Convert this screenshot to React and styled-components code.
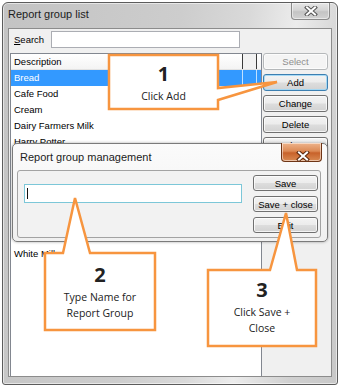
import React from 'react';
import styled, { createGlobalStyle } from 'styled-components';

const GlobalStyle = createGlobalStyle`
  html, body {
    margin: 0;
    padding: 0;
    background: #ffffff;
  }
  body {
    font-family: "Liberation Sans", Arial, sans-serif;
  }
  * {
    box-sizing: border-box;
  }
`;

const Stage = styled.div`
  position: relative;
  width: 340px;
  height: 387px;
  padding: 2px;
  overflow: hidden;
`;

const Window = styled.div`
  width: 336px;
  height: 383px;
  border: 1px solid #5c5c5c;
  border-radius: 6px 6px 3px 3px;
  background: linear-gradient(100deg, #c3c3c3 0%, #cdcdcd 45%, #d9d9d9 62%, #ececec 74%, #d0d0d0 88%, #c8c8c8 100%);
  box-shadow: inset 0 0 0 1px rgba(255, 255, 255, 0.55);
  padding: 0 5px 7px 5px;
  display: flex;
  flex-direction: column;
`;

const TitleBar = styled.div`
  height: 25px;
  display: flex;
  justify-content: space-between;
  align-items: flex-start;
`;

const Title = styled.span`
  padding-top: 5px;
  font-size: 11px;
  line-height: 13px;
  color: #1c1c1c;
`;

const CloseBox = styled.span`
  width: 39px;
  height: 17px;
  margin-right: 2px;
  display: flex;
  align-items: center;
  justify-content: center;
  border: 1px solid #7e7e7e;
  border-top: none;
  border-radius: 0 0 4px 4px;
  background: ${(p) =>
    p.$hot
      ? 'linear-gradient(#eeb48c, #dc8a55 45%, #c8622a 55%, #d98a52)'
      : 'linear-gradient(#e6e6e6, #d4d4d4 45%, #c4c4c4 55%, #d2d2d2)'};
  border-color: ${(p) => (p.$hot ? '#6e3516' : '#8a8a8a')};
  box-shadow: inset 0 0 0 1px rgba(255, 255, 255, 0.5);
`;

const Client = styled.div`
  flex: 1;
  min-height: 0;
  border: 1px solid #8c8c8c;
  background: #f0f0f0;
  padding: 2px 3px 0 1px;
  display: flex;
  flex-direction: column;
`;

const SearchRow = styled.div`
  height: 17px;
  display: flex;
  align-items: center;
`;

const Label = styled.label`
  margin-left: 4px;
  width: 37px;
  font-size: 9.5px;
  color: #000;
  span {
    text-decoration: underline;
  }
`;

const TextBox = styled.div`
  width: ${(p) => p.$w}px;
  height: ${(p) => p.$h}px;
  background: #fff;
  border: 1px solid ${(p) => (p.$active ? '#7cc7d8' : '#abadb3')};
  display: flex;
  align-items: center;
  padding-left: 2px;
`;

const Caret = styled.span`
  width: 1px;
  height: 11px;
  background: #111;
`;

const Main = styled.div`
  flex: 1;
  min-height: 0;
  margin-top: 5px;
  display: flex;
  gap: 1px;
`;

const List = styled.div`
  width: 252px;
  border: 1px solid #828790;
  border-bottom: none;
  background: #fff;
  overflow: hidden;
`;

const Header = styled.div`
  height: 16px;
  display: grid;
  grid-template-columns: 232px 14px 1fr;
  background: linear-gradient(#ffffff, #f4f4f4);
  border-bottom: 1px solid #e2e2e2;
`;

const HeadCell = styled.div`
  font-size: 9.5px;
  line-height: 15px;
  padding-left: 3px;
  color: #000;
  border-right: 1px solid ${(p) => (p.$last ? 'transparent' : '#3a3a3a')};
  background: ${(p) => (p.$mid ? '#f1f1f1' : 'transparent')};
`;

const Row = styled.div`
  height: 16px;
  display: grid;
  grid-template-columns: 232px 14px 1fr;
  background: ${(p) => (p.$selected ? '#3399ff' : 'transparent')};
  color: ${(p) => (p.$selected ? '#ffffff' : '#000000')};
`;

const Cell = styled.div`
  font-size: 9.5px;
  line-height: 16px;
  padding-left: 3px;
  white-space: nowrap;
  border-right: 1px solid ${(p) => (p.$sel ? 'rgba(255,255,255,0.7)' : 'transparent')};
`;

const ButtonCol = styled.div`
  width: 65px;
  display: flex;
  flex-direction: column;
  gap: ${(p) => p.$gap}px;
`;

const Button = styled.button`
  width: 65px;
  height: ${(p) => p.$h}px;
  padding: 0;
  font-family: "Liberation Sans", Arial, sans-serif;
  font-size: 9.5px;
  color: ${(p) => (p.disabled ? '#8e8e8e' : '#000')};
  border: 1px solid ${(p) => (p.$focus ? '#3c7fb1' : p.disabled ? '#b5b8ba' : '#707070')};
  border-radius: 3px;
  background: ${(p) =>
    p.disabled
      ? '#f4f4f4'
      : 'linear-gradient(#f3f3f3, #ececec 48%, #dddddd 52%, #d2d2d2)'};
  box-shadow: inset 0 0 0 1px ${(p) => (p.$focus ? 'rgba(160, 215, 245, 0.9)' : 'rgba(255,255,255,0.75)')};
`;

const Dialog = styled.div`
  position: absolute;
  left: 12px;
  top: 143px;
  width: 316px;
  height: 99px;
  border: 1px solid #7b7b7b;
  border-radius: 5px;
  background: linear-gradient(#fbfbfb, #f0f0f0);
  box-shadow: 0 0 3px rgba(0, 0, 0, 0.35);
  padding: 0 6px 3px 4px;
  display: flex;
  flex-direction: column;
`;

const DialogTitle = styled.div`
  height: 26px;
  display: flex;
  justify-content: space-between;
  align-items: flex-start;
  span {
    padding: 7px 0 0 3px;
    font-size: 11px;
    line-height: 13px;
    color: #1c1c1c;
  }
  ${CloseBox} {
    margin: -1px -1px 0 0;
    width: 41px;
    height: 19px;
  }
`;

const Panel = styled.div`
  flex: 1;
  border: 1px solid #a3a3a3;
  border-radius: 3px;
  background: #f2f2f2;
  display: flex;
  justify-content: space-between;
  padding: 4px 2px 0 6px;
`;

const InputWrap = styled.div`
  padding-top: 9px;
`;

const Callout = styled.div`
  position: absolute;
  left: ${(p) => p.$x}px;
  top: ${(p) => p.$y}px;
  width: ${(p) => p.$w}px;
  height: ${(p) => p.$h}px;
  display: flex;
  flex-direction: column;
  align-items: center;
  padding-top: ${(p) => p.$pad}px;
  font-family: "Open Sans", "Noto Sans", sans-serif;
  color: #222;
  svg {
    position: absolute;
    left: 0;
    top: 0;
    overflow: visible;
  }
`;

const Num = styled.span`
  position: relative;
  font-size: 20px;
  font-weight: 700;
  line-height: 22px;
  margin-bottom: 4px;
`;

const Note = styled.span`
  position: relative;
  font-size: 10.5px;
  line-height: 15.5px;
  text-align: center;
`;

function XGlyph({ hot }) {
  return (
    <svg width="14" height="10" viewBox="0 0 14 10">
      <path d="M3 1.5 L11 8.5 M11 1.5 L3 8.5" stroke={hot ? '#5a2a10' : '#555'} strokeWidth="4" strokeLinecap="square" />
      <path d="M3 1.5 L11 8.5 M11 1.5 L3 8.5" stroke="#fff" strokeWidth="2" strokeLinecap="square" />
    </svg>
  );
}

function Bubble({ x, y, w, h, pad, points, num, lines }) {
  return (
    <Callout $x={x} $y={y} $w={w} $h={h} $pad={pad}>
      <svg width={w} height={h}>
        <polygon points={points} fill="#ffffff" stroke="#f7953f" strokeWidth="2.5" strokeLinejoin="miter" />
      </svg>
      <Num>{num}</Num>
      {lines.map((l) => (
        <Note key={l}>{l}</Note>
      ))}
    </Callout>
  );
}

const items = [
  'Bread',
  'Cafe Food',
  'Cream',
  'Dairy Farmers Milk',
  'Harry Potter',
  'Ice Cream',
  'Juice',
  'Magazines',
  'Newspapers',
  'Snacks',
  'Soft Drinks',
  'White Milk',
];

export default function App() {
  return (
    <Stage>
      <GlobalStyle />
      <Window>
        <TitleBar>
          <Title>Report group list</Title>
          <CloseBox>
            <XGlyph />
          </CloseBox>
        </TitleBar>
        <Client>
          <SearchRow>
            <Label>
              <span>S</span>earch
            </Label>
            <TextBox $w={189} $h={17} />
          </SearchRow>
          <Main>
            <List>
              <Header>
                <HeadCell>Description</HeadCell>
                <HeadCell $mid />
                <HeadCell $last />
              </Header>
              {items.map((name, i) => (
                <Row key={name} $selected={i === 0}>
                  <Cell $sel={i === 0}>{name}</Cell>
                  <Cell $sel={i === 0} />
                  <Cell />
                </Row>
              ))}
            </List>
            <ButtonCol $gap={4}>
              <Button $h={17} disabled>Select</Button>
              <Button $h={17} $focus>Add</Button>
              <Button $h={17}>Change</Button>
              <Button $h={17}>Delete</Button>
              <Button $h={17}>Close</Button>
            </ButtonCol>
          </Main>
        </Client>
      </Window>

      <Dialog>
        <DialogTitle>
          <span>Report group management</span>
          <CloseBox $hot>
            <XGlyph hot />
          </CloseBox>
        </DialogTitle>
        <Panel>
          <InputWrap>
            <TextBox $w={218} $h={19} $active>
              <Caret />
            </TextBox>
          </InputWrap>
          <ButtonCol $gap={5}>
            <Button $h={16}>Save</Button>
            <Button $h={16}>Save + close</Button>
            <Button $h={16}>Exit</Button>
          </ButtonCol>
        </Panel>
      </Dialog>

      <Bubble
        x={109}
        y={55}
        w={109}
        h={54}
        pad={8}
        points="0,0 109,0 109,33 168,27 109,45 109,54 0,54"
        num="1"
        lines={['Click Add']}
      />
      <Bubble
        x={45}
        y={253}
        w={110}
        h={77}
        pad={11}
        points="0,0 18,0 30,-55 45,0 110,0 110,77 0,77"
        num="2"
        lines={['Type Name for', 'Report Group']}
      />
      <Bubble
        x={208}
        y={270}
        w={108}
        h={76}
        pad={9}
        points="0,0 62,0 78,-57 89,0 108,0 108,76 0,76"
        num="3"
        lines={['Click Save +', 'Close']}
      />
    </Stage>
  );
}
